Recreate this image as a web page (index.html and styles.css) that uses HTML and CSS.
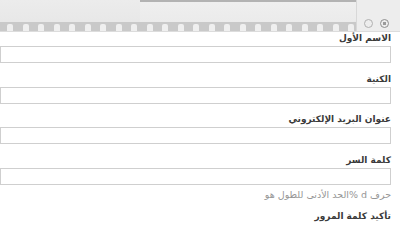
FILE: index.html
```html
<!DOCTYPE html>
<html lang="ar">
<head>
<meta charset="utf-8">
<link rel="stylesheet" href="styles.css">
</head>
<body>
<header class="chrome">
  <div class="chrome-main">
    <div class="chrome-top"><div class="chrome-tab"></div></div>
    <div class="strip">
      <span class="notch"></span><span class="notch"></span><span class="notch"></span><span class="notch"></span><span class="notch"></span><span class="notch"></span><span class="notch"></span><span class="notch"></span><span class="notch"></span><span class="notch"></span><span class="notch"></span><span class="notch"></span><span class="notch"></span><span class="notch"></span><span class="notch"></span><span class="notch"></span><span class="notch"></span><span class="notch"></span><span class="notch"></span><span class="notch"></span><span class="notch"></span><span class="notch"></span><span class="notch"></span>
    </div>
  </div>
  <div class="chrome-side">
    <span class="dot"></span>
    <span class="dot dot-on"></span>
  </div>
</header>
<form class="form" dir="rtl">
  <div class="field">
    <label class="label">الاسم الأول</label>
    <input class="input" type="text">
  </div>
  <div class="field">
    <label class="label">الكنية</label>
    <input class="input" type="text">
  </div>
  <div class="field">
    <label class="label">عنوان البريد الإلكتروني</label>
    <input class="input" type="text">
  </div>
  <div class="field field-last">
    <label class="label">كلمة السر</label>
    <input class="input" type="password">
  </div>
  <p class="hint">حرف d %الحد الأدنى للطول هو</p>
  <label class="label label-confirm">تأكيد كلمة المرور</label>
</form>
</body>
</html>
```
FILE: styles.css
```css
html, body {
  margin: 0;
  padding: 0;
  background: #ffffff;
  overflow: hidden;
}
body {
  width: 400px;
  height: 225px;
  font-family: "DejaVu Sans", sans-serif;
}
.chrome {
  display: flex;
  height: 32px;
  background: #e9e9e9;
  border-bottom: 1px solid #dcdcdc;
  box-sizing: border-box;
}
.chrome-main {
  flex: 1;
  display: flex;
  flex-direction: column;
  background: linear-gradient(#ececec, #e6e6e6);
}
.chrome-top {
  height: 22px;
  display: flex;
  padding-left: 140px;
}
.chrome-tab {
  flex: 1;
  border-top: 2px solid #b3b3b3;
  background: linear-gradient(#efefef, #ebebeb);
  border-bottom-right-radius: 4px;
}
.strip {
  height: 9px;
  background: #c9c9c9;
  display: flex;
  align-items: flex-end;
  gap: 9.5px;
  padding-left: 7px;
  overflow: hidden;
}
.notch {
  flex: none;
  width: 6px;
  height: 7px;
  background: #efefef;
  border-radius: 2px 2px 0 0;
}
.chrome-side {
  width: 44px;
  display: flex;
  align-items: flex-end;
  gap: 7px;
  padding: 0 0 3px 7px;
  box-sizing: border-box;
  background: #ededed;
  border-left: 1px solid #d8d8d8;
}
.dot {
  width: 9px;
  height: 9px;
  border: 1px solid #b0b0b0;
  border-radius: 50%;
  box-sizing: border-box;
}
.dot-on {
  border-color: #8f8f8f;
  background: radial-gradient(circle, #9a9a9a 0 1.5px, transparent 2px);
}
.form {
  margin: 0;
  padding: 0 9px 0 0;
}
.field {
  display: flex;
  flex-direction: column;
  margin-bottom: 9.5px;
}
.field-last {
  margin-bottom: 0;
}
.label {
  display: block;
  font-size: 9px;
  line-height: 12px;
  font-weight: bold;
  color: #3a3a3a;
  margin-bottom: 2px;
}
.input {
  display: block;
  width: 100%;
  height: 17px;
  box-sizing: border-box;
  margin: 0;
  border: 1px solid #cfcfcf;
  background: #ffffff;
}
.hint {
  margin: 4px 0 0;
  font-size: 9.5px;
  line-height: 12px;
  color: #969696;
}
.label-confirm {
  margin-top: 9px;
}
```
